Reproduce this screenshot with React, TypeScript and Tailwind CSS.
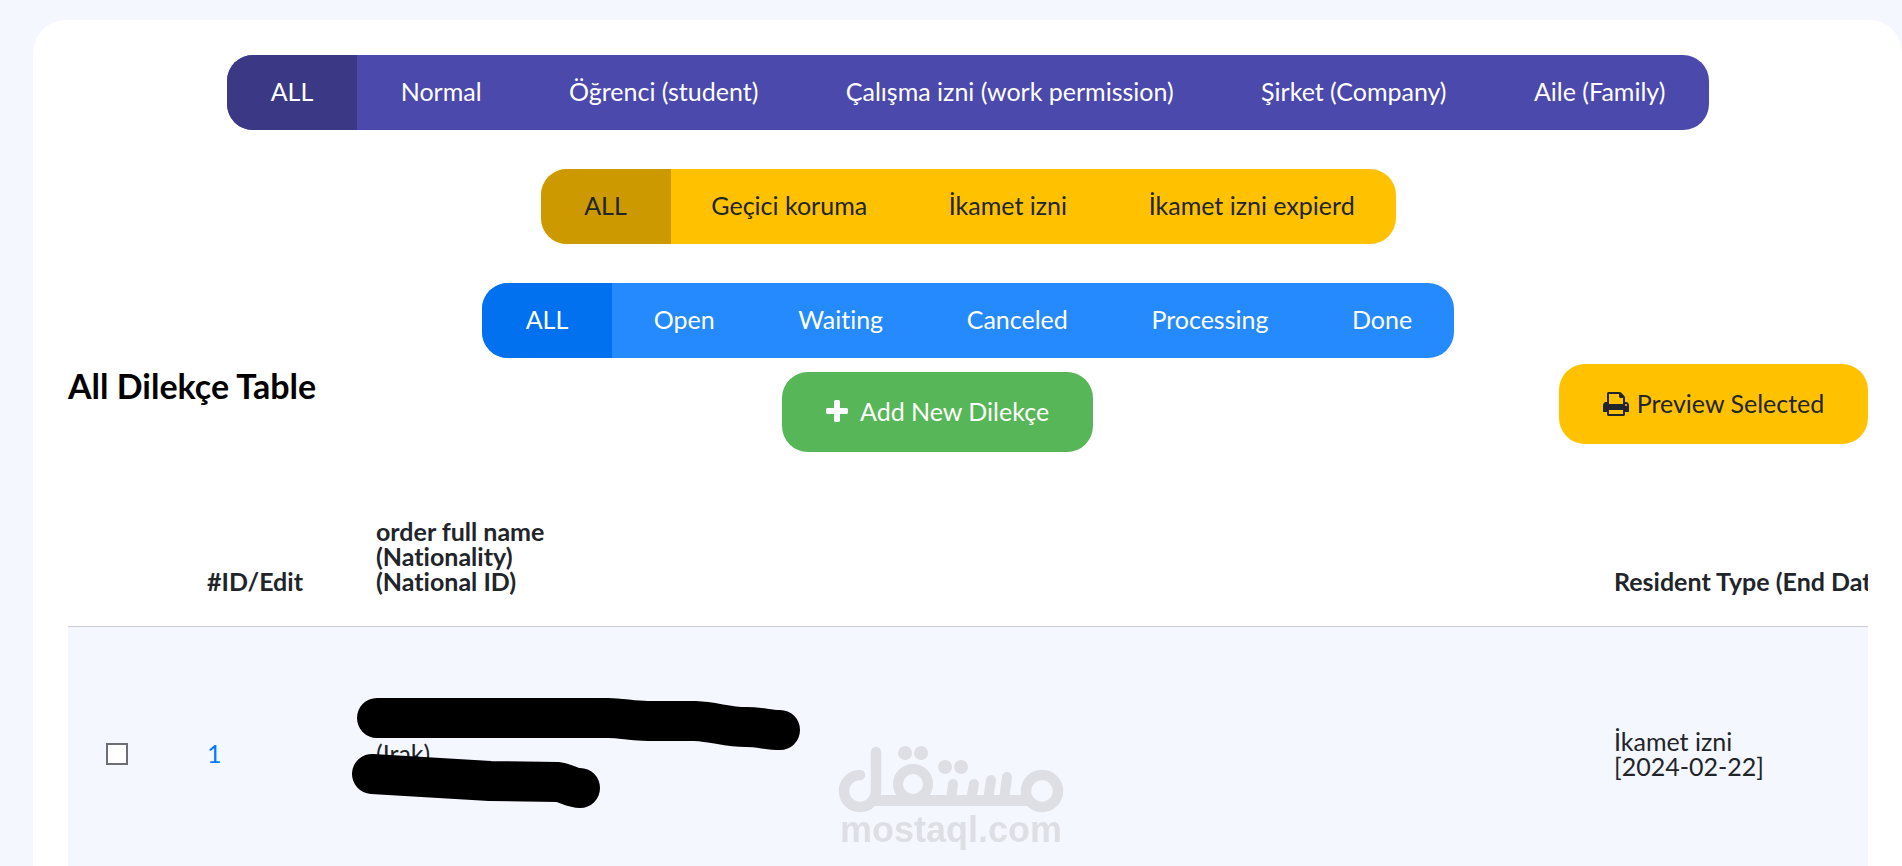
import { useState } from 'react'
import clsx from 'clsx'

interface FilterGroupProps {
  label: string
  options: string[]
  className: string
  activeClassName: string
}

interface Order {
  id: number
  nationality: string
  residentType: string
  endDate: string
}

const orderTypes = [
  'ALL',
  'Normal',
  'Öğrenci (student)',
  'Çalışma izni (work permission)',
  'Şirket (Company)',
  'Aile (Family)'
]

const residentTypes = ['ALL', 'Geçici koruma', 'İkamet izni', 'İkamet izni expierd']

const statuses = ['ALL', 'Open', 'Waiting', 'Canceled', 'Processing', 'Done']

const orders: Order[] = [
  { id: 1, nationality: 'Irak', residentType: 'İkamet izni', endDate: '2024-02-22' }
]

function FilterGroup({ label, options, className, activeClassName }: FilterGroupProps) {
  const [selected, setSelected] = useState(options[0])

  return (
    <div
      role="group"
      aria-label={label}
      className={clsx('flex w-full overflow-hidden rounded-[26px]', className)}
    >
      {options.map(option => (
        <button
          key={option}
          type="button"
          aria-pressed={option === selected}
          onClick={() => setSelected(option)}
          className={clsx(
            'h-[75px] grow pb-0.5 text-[25px] whitespace-nowrap first:w-[130px] first:grow-0',
            option === selected && activeClassName
          )}
        >
          {option}
        </button>
      ))}
    </div>
  )
}

function PlusIcon() {
  return (
    <svg viewBox="0 0 1408 1792" className="h-7 w-[22px] fill-current" aria-hidden="true">
      <path d="M1408 736v192q0 40-28 68t-68 28h-416v416q0 40-28 68t-68 28h-192q-40 0-68-28t-28-68v-416h-416q-40 0-68-28t-28-68v-192q0-40 28-68t68-28h416v-416q0-40 28-68t68-28h192q40 0 68 28t28 68v416h416q40 0 68 28t28 68z" />
    </svg>
  )
}

function PrintIcon() {
  return (
    <svg viewBox="0 0 1664 1792" className="h-7 w-[26px] fill-current" aria-hidden="true">
      <path d="M384 1536h896v-256h-896v256zM384 896h896v-384h-160q-40 0-68-28t-28-68v-160h-640v640zM1536 960q0-26-19-45t-45-19-45 19-19 45 19 45 45 19 45-19 19-45zM1664 960v416q0 13-9.5 22.5t-22.5 9.5h-224v160q0 40-28 68t-68 28h-960q-40 0-68-28t-28-68v-160h-224q-13 0-22.5-9.5t-9.5-22.5v-416q0-79 56.5-135.5t135.5-56.5h64v-544q0-40 28-68t68-28h672q40 0 88 20t76 48l152 152q28 28 48 76t20 88v256h64q79 0 135.5 56.5t56.5 135.5z" />
    </svg>
  )
}

// Marker strokes over the private name and ID
function Redaction() {
  return (
    <svg
      viewBox="0 0 450 112"
      className="absolute top-1/2 left-3 h-[112px] w-[450px] -translate-y-1/2"
      fill="none"
      stroke="black"
      strokeWidth="40"
      strokeLinecap="round"
      strokeLinejoin="round"
      aria-hidden="true"
    >
      <path d="M27 20H258C272 20 282 23 298 23H345C366 24 376 29 396 29C410 29 418 32 430 32" />
      <path d="M22 76L140 83L208 84C216 85 222 90 230 90" />
    </svg>
  )
}

function Watermark() {
  return (
    <div className="pointer-events-none fixed bottom-5 left-1/2 flex -translate-x-1/2 flex-col items-center text-[#dedfe4]">
      <svg
        viewBox="0 0 226 68"
        className="h-[68px] w-[226px]"
        fill="none"
        stroke="currentColor"
        strokeLinecap="round"
        aria-hidden="true"
      >
        <path d="M22 29A16 16 0 1 0 38 45V6" strokeWidth="10.5" />
        <path d="M35 54.5H190" strokeWidth="11" />
        <circle cx="75" cy="38" r="15" strokeWidth="10" />
        <circle cx="204" cy="45" r="16" strokeWidth="10.5" />
        <path d="M115 38L113 54M136 38L133 54M153 34L150 54M169 31L166 54" strokeWidth="10" />
        <g fill="currentColor" stroke="none">
          <circle cx="67" cy="7" r="7" />
          <circle cx="83" cy="7" r="7" />
          <circle cx="107" cy="21" r="7" />
          <circle cx="123" cy="21" r="7" />
        </g>
      </svg>
      <span className="font-['Liberation_Sans',sans-serif] text-[36px] leading-8 font-bold">mostaql.com</span>
    </div>
  )
}

export default function App() {
  return (
    <div className="h-screen overflow-hidden bg-[#f5f7ff] pt-5 pl-[33px] font-['Lato',sans-serif] text-[#212529] [font-variant-ligatures:none]">
      <main className="min-h-full rounded-t-[33px] bg-white pt-[35px] pr-[34px] pl-[35px]">
        <div className="flex flex-col items-center gap-[39px]">
          <FilterGroup
            label="Order type"
            options={orderTypes}
            className="max-w-[1482px] bg-[#4b49ac] text-white"
            activeClassName="bg-[#3b3986]"
          />
          <FilterGroup
            label="Resident type"
            options={residentTypes}
            className="max-w-[855px] bg-[#ffc100]"
            activeClassName="bg-[#cc9a00]"
          />
          <FilterGroup
            label="Status"
            options={statuses}
            className="max-w-[972px] bg-[#248afd] text-white"
            activeClassName="bg-[#0271ef]"
          />
        </div>

        <div className="flex items-start justify-between pt-1.5">
          <h1 className="pt-0.5 text-[34px] leading-10 font-bold text-black">All Dilekçe Table</h1>
          <button
            type="button"
            className="mt-2 flex h-20 w-[311px] items-center justify-center gap-3 rounded-[26px] bg-[#57b657] text-[25px] text-white"
          >
            <PlusIcon />
            Add New Dilekçe
          </button>
          <button
            type="button"
            className="flex h-20 w-[309px] items-center justify-center gap-2 rounded-[26px] bg-[#ffc100] text-[25px]"
          >
            <PrintIcon />
            Preview Selected
          </button>
        </div>

        <div className="mt-[35px] overflow-hidden">
          <table className="w-[1908px] table-fixed text-left text-[25px] leading-[25px]">
            <colgroup>
              <col className="w-[101px]" />
              <col className="w-[169px]" />
              <col />
              <col className="w-[400px]" />
            </colgroup>
            <thead>
              <tr className="border-b border-[#c9ccd7] align-bottom whitespace-nowrap">
                <th className="px-[38px]" aria-label="Select" />
                <th className="px-[38px] py-8">#ID/Edit</th>
                <th className="px-[38px] py-8">
                  order full name
                  <br />
                  (Nationality)
                  <br />
                  (National ID)
                </th>
                <th className="px-[38px] py-8">Resident Type (End Date)</th>
              </tr>
            </thead>
            <tbody>
              {orders.map(order => (
                <tr key={order.id} className="h-[254px] bg-[#f5f7ff]">
                  <td className="px-[38px]">
                    <input
                      type="checkbox"
                      aria-label={`Select order ${order.id}`}
                      className="block size-[22px] appearance-none border-2 border-[#6b6e73] bg-white checked:bg-[#248afd]"
                    />
                  </td>
                  <td className="px-[38px]">
                    <a href={`#order-${order.id}`} className="text-[#007bff]">
                      {order.id}
                    </a>
                  </td>
                  <td className="relative px-[38px]">
                    ({order.nationality})
                    <Redaction />
                  </td>
                  <td className="px-[38px]">
                    {order.residentType}
                    <br />[{order.endDate}]
                  </td>
                </tr>
              ))}
            </tbody>
          </table>
        </div>
      </main>
      <Watermark />
    </div>
  )
}
